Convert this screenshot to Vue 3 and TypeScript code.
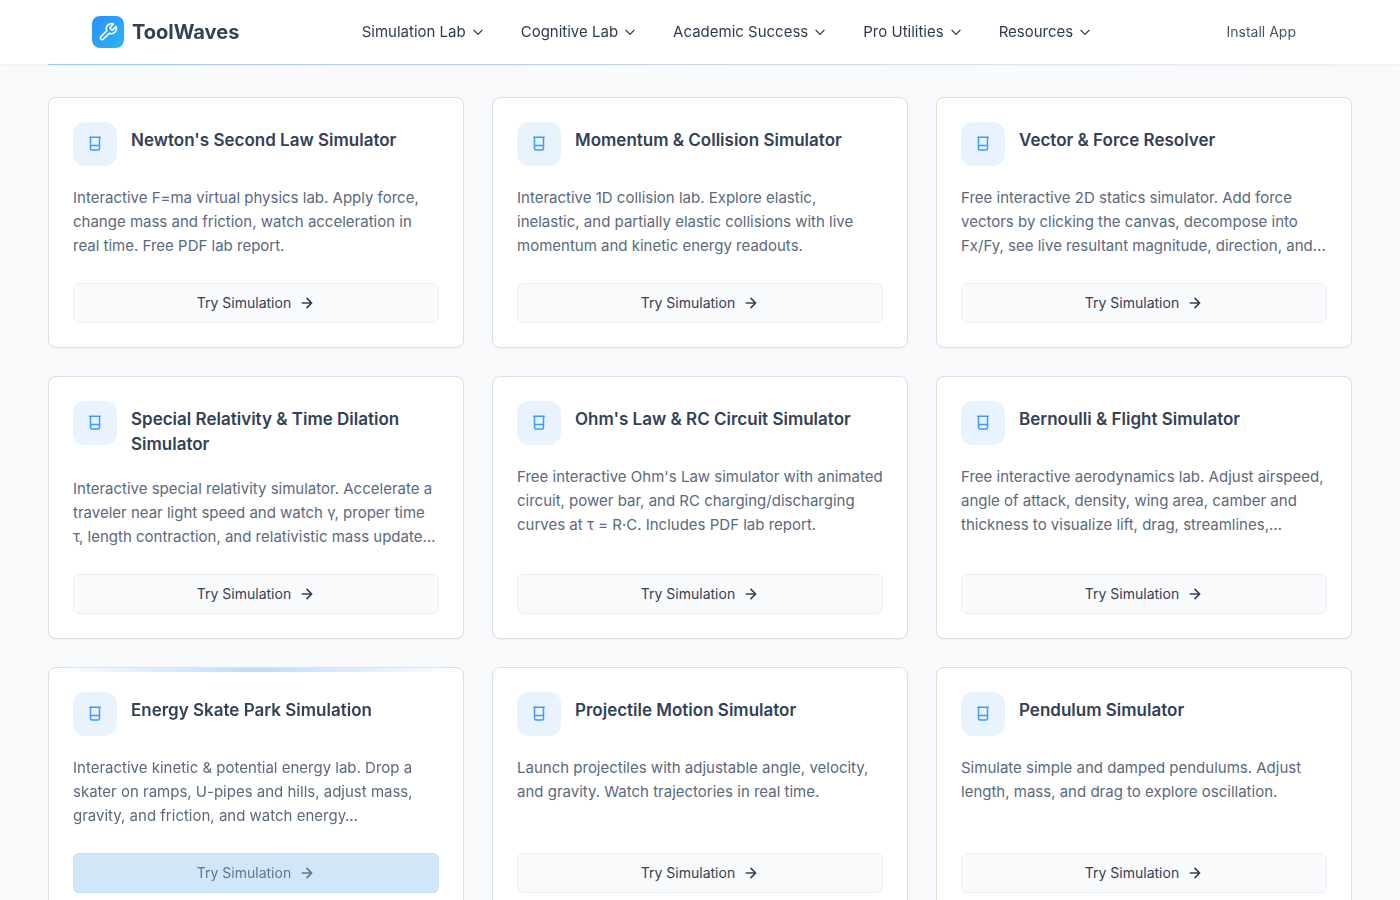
<script setup lang="ts">
interface Tool {
  title: string
  description: string
  active?: boolean
}

const menus: string[] = [
  'Simulation Lab',
  'Cognitive Lab',
  'Academic Success',
  'Pro Utilities',
  'Resources',
]

const tools: Tool[] = [
  {
    title: "Newton's Second Law Simulator",
    description:
      'Interactive F=ma virtual physics lab. Apply force, change mass and friction, watch acceleration in real time. Free PDF lab report.',
  },
  {
    title: 'Momentum & Collision Simulator',
    description:
      'Interactive 1D collision lab. Explore elastic, inelastic, and partially elastic collisions with live momentum and kinetic energy readouts.',
  },
  {
    title: 'Vector & Force Resolver',
    description:
      'Free interactive 2D statics simulator. Add force vectors by clicking the canvas, decompose into Fx/Fy, see live resultant magnitude, direction, and…',
  },
  {
    title: 'Special Relativity & Time Dilation Simulator',
    description:
      'Interactive special relativity simulator. Accelerate a traveler near light speed and watch γ, proper time τ, length contraction, and relativistic mass update…',
  },
  {
    title: "Ohm's Law & RC Circuit Simulator",
    description:
      "Free interactive Ohm's Law simulator with animated circuit, power bar, and RC charging/discharging curves at τ = R·C. Includes PDF lab report.",
  },
  {
    title: 'Bernoulli & Flight Simulator',
    description:
      'Free interactive aerodynamics lab. Adjust airspeed, angle of attack, density, wing area, camber and thickness to visualize lift, drag, streamlines,…',
  },
  {
    title: 'Energy Skate Park Simulation',
    description:
      'Interactive kinetic & potential energy lab. Drop a skater on ramps, U-pipes and hills, adjust mass, gravity, and friction, and watch energy…',
    active: true,
  },
  {
    title: 'Projectile Motion Simulator',
    description:
      'Launch projectiles with adjustable angle, velocity, and gravity. Watch trajectories in real time.',
  },
  {
    title: 'Pendulum Simulator',
    description:
      'Simulate simple and damped pendulums. Adjust length, mass, and drag to explore oscillation.',
  },
]
</script>

<template>
  <div class="page">
    <header class="topbar">
      <div class="topbar-inner">
        <a class="brand" href="#">
          <span class="brand-mark">
            <svg class="icon" width="20" height="20" viewBox="0 0 24 24" aria-hidden="true">
              <path
                d="M14.7 6.3a1 1 0 0 0 0 1.4l1.6 1.6a1 1 0 0 0 1.4 0l3.77-3.77a6 6 0 0 1-7.94 7.94l-6.91 6.91a2.12 2.12 0 0 1-3-3l6.91-6.91a6 6 0 0 1 7.94-7.94l-3.76 3.76z"
              />
            </svg>
          </span>
          <span class="brand-name">ToolWaves</span>
        </a>
        <nav class="menu" aria-label="Main">
          <button v-for="item in menus" :key="item" type="button" class="menu-item">
            {{ item }}
            <svg class="icon" width="14" height="14" viewBox="0 0 24 24" aria-hidden="true">
              <path d="m5 9 7 7 7-7" />
            </svg>
          </button>
        </nav>
        <button type="button" class="install">Install App</button>
      </div>
    </header>

    <main class="content">
      <div class="grid">
        <article v-for="tool in tools" :key="tool.title" class="card" :class="{ active: tool.active }">
          <div class="card-head">
            <span class="tile">
              <svg class="icon" width="18" height="18" viewBox="0 0 24 24" aria-hidden="true">
                <path d="M5 3h14M6 3v15a2 2 0 0 0 2 2h8a2 2 0 0 0 2-2V3M6 14h12" />
              </svg>
            </span>
            <h2 class="title">{{ tool.title }}</h2>
          </div>
          <p class="description">{{ tool.description }}</p>
          <a class="action" href="#">
            Try Simulation
            <svg class="icon arrow" width="16" height="16" viewBox="0 0 24 24" aria-hidden="true">
              <path d="M5 12h14M12 5l7 7-7 7" />
            </svg>
          </a>
        </article>
      </div>
    </main>
  </div>
</template>

<style>
html,
body {
  background: #f9fafc;
}
</style>

<style scoped>
.page {
  height: 100vh;
  overflow: hidden;
  background: #f9fafc;
  color: #334155;
  font-family: Inter, 'Noto Sans', sans-serif;
}

.icon {
  display: block;
  flex: none;
  fill: none;
  stroke: currentColor;
  stroke-width: 2;
  stroke-linecap: round;
  stroke-linejoin: round;
}

.arrow {
  stroke-width: 2.5;
}

.topbar {
  position: relative;
  z-index: 1;
  background: #fff;
  box-shadow: 0 1px 3px rgba(15, 23, 42, 0.06);
  will-change: transform;
}

.topbar::after {
  content: '';
  position: absolute;
  top: 100%;
  left: 48px;
  right: 48px;
  height: 1px;
  background: linear-gradient(90deg, #9ac8f5, #cbd5e1 50%, rgba(203, 213, 225, 0));
}

.topbar-inner {
  display: flex;
  align-items: center;
  justify-content: space-between;
  height: 64px;
  padding: 0 92px;
}

.brand {
  display: flex;
  align-items: center;
  gap: 8px;
  color: #334155;
  text-decoration: none;
}

.brand-mark {
  display: grid;
  place-items: center;
  width: 32px;
  height: 32px;
  border-radius: 8px;
  background: linear-gradient(135deg, #2b8ff7, #2cb5f4);
  color: #fff;
}

.brand-name {
  font-size: 20px;
  font-weight: 700;
  line-height: 28px;
}

.menu {
  display: flex;
  gap: 12px;
}

.menu-item,
.install {
  border: 0;
  padding: 8px 12px;
  background: none;
  color: #2d3b50;
  font: 400 15px/24px Inter, 'Noto Sans', sans-serif;
  cursor: pointer;
}

.menu-item {
  display: flex;
  align-items: center;
  gap: 5px;
}

.install {
  color: #475569;
  font-size: 14px;
}

.content {
  padding: 33px 48px;
}

.grid {
  display: grid;
  grid-template-columns: repeat(3, minmax(0, 1fr));
  gap: 28px;
}

.card {
  position: relative;
  display: flex;
  flex-direction: column;
  overflow: hidden;
  padding: 24px;
  border: 1px solid #d9dfe8;
  border-radius: 8px;
  background: #fff;
  box-shadow: 0 1px 3px rgba(15, 23, 42, 0.04);
}

.card-head {
  display: flex;
  align-items: flex-start;
  gap: 14px;
  margin-bottom: 20px;
}

.tile {
  display: grid;
  flex: none;
  place-items: center;
  width: 44px;
  height: 44px;
  border-radius: 12px;
  background: #e8f3fe;
  color: #3d9bfb;
}

.title {
  margin: 0;
  padding-top: 6px;
  color: #334155;
  font-size: 17px;
  font-weight: 600;
  line-height: 25px;
}

.description {
  flex: 1;
  margin: 0 0 25px;
  color: #5b697e;
  font-size: 15px;
  line-height: 24px;
}

.action {
  display: flex;
  align-items: center;
  justify-content: center;
  gap: 8px;
  box-sizing: border-box;
  height: 40px;
  border: 1px solid #eaeef3;
  border-radius: 6px;
  background: #f9fafc;
  color: #334155;
  font-size: 14px;
  line-height: 20px;
  text-decoration: none;
}

.active {
  will-change: transform;
}

.active::before {
  content: '';
  position: absolute;
  top: 0;
  left: 0;
  right: 0;
  height: 4px;
  background: linear-gradient(90deg, rgba(191, 220, 251, 0), #bfdcfb, rgba(191, 220, 251, 0));
}

.active .action {
  border-color: #c5dff8;
  background: #d2e6fa;
  color: #64748b;
}
</style>
